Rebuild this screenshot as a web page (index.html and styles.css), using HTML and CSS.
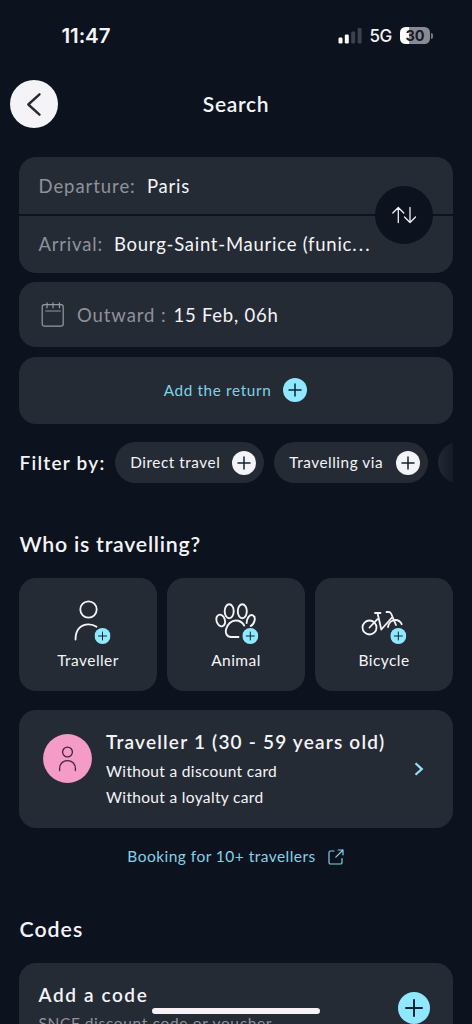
FILE: index.html
```html
<!DOCTYPE html>
<html lang="en">
<head>
<meta charset="utf-8">
<title>Search</title>
<link rel="stylesheet" href="styles.css">
</head>
<body>
<svg class="defs" width="0" height="0" aria-hidden="true">
  <symbol id="plus" viewBox="0 0 24 24"><circle cx="12" cy="12" r="12"/><path d="M12 6v12M6 12h12" fill="none" stroke="#0c2530" stroke-width="1.5" stroke-linecap="round"/></symbol>
</svg>
<div class="screen">
  <div class="status">
    <span class="time">11:47</span>
    <div class="status-right">
      <svg width="24" height="16" viewBox="0 0 24 16"><rect x=".5" y="9.5" width="4" height="6" rx="1.2" fill="#fff"/><rect x="6.8" y="6.5" width="4" height="9" rx="1.2" fill="#fff"/><rect x="13.2" y="3.5" width="4" height="12" rx="1.2" fill="#3d424c"/><rect x="19.6" y="0" width="4" height="15.500" rx="1.2" fill="#3d424c"/></svg>
      <span class="net">5G</span>
      <div class="battery"><span>30</span></div>
      <i class="nub"></i>
    </div>
  </div>
  <header class="header">
    <button class="back"><svg width="48" height="48" viewBox="0 0 48 48"><path d="M29.500 14.300 18.300 24.500l11.200 10.200" fill="none" stroke="#252a33" stroke-width="2.400" stroke-linecap="round" stroke-linejoin="round"/></svg></button>
    <h1 class="title">Search</h1>
  </header>

  <section class="trip">
    <div class="row"><span class="label departure">Departure:</span><span class="value paris">Paris</span></div>
    <div class="row"><span class="label arrival">Arrival:</span><span class="value bourg">Bourg-Saint-Maurice (funic<span class="dots">...</span></span></div>
    <button class="swap"><svg width="26" height="20" viewBox="0 0 26 20" fill="none" stroke="#f0f1f5" stroke-width="1.300" stroke-linecap="round" stroke-linejoin="round"><path d="M7.300 17.500V2.500M1.800 8 7.300 2.500 12.800 8M19 2.500v15M13.500 12l5.500 5.500 5.500-5.500"/></svg></button>
  </section>

  <section class="date card">
    <svg width="24" height="26" viewBox="0 0 24 26" fill="none" stroke="#9699a0" stroke-width="1.200" stroke-linecap="round"><rect x="1.200" y="2.700" width="21" height="21.500" rx="2.200"/><path d="M4.800 9h14.500M6 .8v5M12 .8v5M18.500 .8v5"/></svg>
    <span class="label outward">Outward :</span><span class="value when">15 Feb, 06h</span>
  </section>

  <section class="return card"><span>Add the return</span><svg class="plus" width="24" height="24"><use href="#plus"/></svg></section>

  <section class="filters">
    <h2 class="filter-title">Filter by:</h2>
    <div class="chips">
      <div class="chip direct"><span>Direct travel</span><svg class="plus light" width="24" height="24"><use href="#plus"/></svg></div>
      <div class="chip via"><span>Travelling via</span><svg class="plus light" width="24" height="24"><use href="#plus"/></svg></div>
      <div class="chip next"></div>
    </div>
  </section>

  <h2 class="heading who">Who is travelling?</h2>
  <section class="types">
    <div class="type">
      <svg width="48" height="48" viewBox="0 0 48 48" fill="none" stroke="#f4f4f8" stroke-width="1.800" stroke-linecap="round"><circle cx="24.500" cy="13.500" r="8.200"/><path d="M11.500 43.500c0-10 5.500-15.200 13-15.200 3 0 6 1 8 2.500"/><use class="plus" href="#plus" x="30.500" y="32" width="16" height="16"/></svg>
      <span>Traveller</span>
    </div>
    <div class="type">
      <svg width="48" height="48" viewBox="0 0 48 48" fill="none" stroke="#f4f4f8" stroke-width="1.900" stroke-linecap="round"><ellipse cx="8.700" cy="24.500" rx="4.200" ry="6" transform="rotate(-18 8.700 24.500)"/><ellipse cx="17.200" cy="15.200" rx="4.500" ry="7"/><ellipse cx="30.300" cy="15.200" rx="4.500" ry="7"/><path d="M34.600 27c0-4.700 3.200-9 6.300-7.700 3.200 1.600 2.200 8-2.200 10.800M26.500 41h-7.300c-4.500 0-6.200-4-5-8.200 1.300-4.500 5-8.300 9.500-8.300 3.800 0 6.800 2 8.500 5"/><use class="plus" href="#plus" x="30.300" y="32" width="16" height="16"/></svg>
      <span>Animal</span>
    </div>
    <div class="type">
      <svg width="48" height="48" viewBox="0 0 48 48" fill="none" stroke="#f4f4f8" stroke-width="1.800" stroke-linecap="round" stroke-linejoin="round"><circle cx="9.500" cy="31.500" r="7"/><path d="m9.500 31.500 7.700-8.200M15 17h5.500M17.500 17l3.800 16.500L32 21.500M26.500 16h2.500c1.300 0 1.800.8 2.300 2l4.700 11M28 31c.7-4.500 4-7 7.500-7 2.700 0 5 1.500 6.200 4.200"/><use class="plus" href="#plus" x="30.300" y="32" width="16" height="16"/></svg>
      <span>Bicycle</span>
    </div>
  </section>

  <section class="traveller card">
    <svg class="avatar" width="49" height="49" viewBox="0 0 49 49" fill="none" stroke="#42243f" stroke-width="1.300" stroke-linecap="round"><circle cx="24.500" cy="24.500" r="24.400" fill="#f59bc7" stroke="none"/><circle cx="24.500" cy="18" r="4.900"/><path d="M16.600 36.500v-2c0-5 3.500-7.900 7.900-7.900s7.900 2.900 7.900 7.900v2"/></svg>
    <div class="info">
      <h3>Traveller 1 (30 - 59 years old)</h3>
      <p class="discount">Without a discount card</p>
      <p class="loyalty">Without a loyalty card</p>
    </div>
    <svg class="chev" width="10" height="14" viewBox="0 0 10 14"><path d="m1.500 1.200 6.300 5.900-6.300 5.700" fill="none" stroke="#8fe4fb" stroke-width="2.200"/></svg>
  </section>

  <a class="booking"><span>Booking for 10+ travellers</span><svg width="16" height="16" viewBox="0 0 16 16" fill="none" stroke="#80d2e7" stroke-width="1.200" stroke-linecap="round" stroke-linejoin="round"><path d="M6 2H2.600Q1 2 1 3.600v9.800Q1 15 2.600 15h9.800q1.600 0 1.600-1.600V9.500M7.800 8.200 15 1M10.200 1H15v4.800"/></svg></a>

  <h2 class="heading codes">Codes</h2>
  <section class="code card">
    <div><h3>Add a code</h3><p>SNCF discount code or voucher</p></div>
    <svg class="plus" width="32" height="32"><use href="#plus"/></svg>
  </section>
  <div class="home"></div>
</div>
</body>
</html>
```
FILE: styles.css
```css
* { box-sizing: border-box; margin: 0; padding: 0; }
body { background: #0c121e; }
.defs { position: absolute; }
.screen {
  position: relative; width: 472px; height: 1024px; overflow: hidden;
  display: flex; flex-direction: column; padding: 0 19px;
  background: #0c121e; color: #f4f4f8;
  font-family: Lato, "Noto Sans", sans-serif; white-space: nowrap;
}
.screen > * { flex-shrink: 0; }
svg { display: block; flex: none; }
button { border: 0; border-radius: 50%; }
.card, .type { background: #252b35; border-radius: 17px; }
.plus { fill: #8fe8ff; stroke: none; }
.light { fill: #f4f4f8; }

.status { height: 72px; display: flex; align-items: center; justify-content: space-between; padding: 0 20px 0 42.500px; font-family: Inter, sans-serif; }
.time { font-size: 20.500px; font-weight: 600; letter-spacing: -.1px; margin-top: -1px; }
.status-right { display: flex; align-items: center; margin-top: -1px; }
.net { font-size: 17px; font-weight: 500; letter-spacing: -.3px; margin: 0 8px 0 7px; }
.battery { width: 30px; height: 17px; border-radius: 5.500px; background: linear-gradient(90deg, #fff 9px, #888b93 9px); color: #161b26; font-size: 14.500px; font-weight: 700; line-height: 17px; text-align: center; }
.nub { width: 2px; height: 6px; margin-left: 1px; border-radius: 0 2px 2px 0; background: #777a82; }

.header { height: 85px; display: grid; grid-template-columns: 48px 1fr 48px; padding-top: 8px; margin: 0 -9.500px; }
.back { width: 48px; height: 48px; background: #f4f4f8; }
.title { font-size: 21px; line-height: 48px; font-weight: 600; letter-spacing: .65px; text-align: center; }

.trip { position: relative; display: flex; flex-direction: column; gap: 2px; height: 116px; border-radius: 17px; }
.row { flex: none; height: 57px; display: flex; align-items: center; padding-left: 19.500px; background: #252b35; font-size: 18.500px; }
.row:first-child { border-radius: 17px 17px 0 0; }
.row:nth-child(2) { border-radius: 0 0 17px 17px; padding-bottom: 2px; }
.label { color: #8f929a; }
.departure { width: 108.500px; letter-spacing: .95px; }
.arrival { width: 75.500px; letter-spacing: .8px; }
.value { letter-spacing: .75px; }
.dots { letter-spacing: 2.200px; }
.swap { position: absolute; right: 20px; top: 29px; width: 58px; height: 58px; background: #0c121e; display: grid; place-items: center; }

.date { height: 65px; margin-top: 9px; display: flex; align-items: center; padding-left: 21.500px; font-size: 18.500px; }
.outward { width: 96.500px; margin-left: 12.500px; letter-spacing: .9px; }
.return { height: 67px; margin-top: 10px; display: flex; align-items: center; justify-content: center; gap: 12px; color: #80d2e7; font-size: 15.300px; letter-spacing: .65px; padding: 0 1px 1px 0; }

.filters { height: 41px; margin-top: 18px; display: flex; align-items: center; }
.filter-title { width: 96.300px; padding: 0 0 1px .5px; font-size: 19px; font-weight: 600; letter-spacing: 1.250px; }
.chips { flex: 1; display: flex; gap: 10px; overflow: hidden; }
.chip { flex: none; height: 41px; border-radius: 21px; background: #252b35; display: flex; align-items: center; justify-content: space-between; padding: 0 8px 0 15px; font-size: 15.300px; letter-spacing: .55px; }
.chip span { padding-bottom: 1px; }
.direct { width: 149px; }
.via { width: 154px; }
.next { width: 41px; background: linear-gradient(90deg, #222832, #151b26 16px); }

.heading { font-size: 21.300px; line-height: 26px; font-weight: 600; letter-spacing: .75px; padding-left: .5px; }
.who { margin-top: 48px; }
.types { margin-top: 20.500px; display: grid; grid-template-columns: repeat(3, 1fr); gap: 10px; height: 113px; }
.type { display: flex; flex-direction: column; align-items: center; padding-top: 18px; font-size: 15.500px; letter-spacing: .45px; line-height: 20px; }
.type span { margin-top: 6px; }

.traveller { height: 118px; margin-top: 19.500px; display: flex; padding: 0 29.500px 0 24px; }
.avatar { margin-top: 24px; }
.info { flex: 1; margin-left: 14px; padding-top: 20px; }
.info h3 { font-size: 19px; line-height: 24px; font-weight: 600; letter-spacing: 1.200px; }
.info p { font-size: 15.500px; line-height: 26.300px; letter-spacing: .33px; }
.discount { margin-top: 4px; }
.chev { align-self: center; }
.booking { height: 20px; margin-top: 18.500px; display: flex; align-items: center; justify-content: center; gap: 12px; color: #80d2e7; font-size: 15.500px; letter-spacing: .46px; padding-right: 1px; }
.booking span { padding-bottom: 1px; }
.codes { margin-top: 49px; letter-spacing: 1px; }
.code { height: 91px; margin-top: 21px; display: flex; justify-content: space-between; padding: 20px 23.500px 0 19.500px; }
.code h3 { font-size: 19px; line-height: 24px; font-weight: 600; letter-spacing: 1.600px; }
.code p { font-size: 15.500px; line-height: 20px; letter-spacing: .66px; color: #8f929a; margin-top: 6px; }
.code svg { margin-top: 9px; }
.home { position: absolute; left: 152px; top: 1008px; width: 168px; height: 6px; border-radius: 3px; background: #f6f2f7; }
```
